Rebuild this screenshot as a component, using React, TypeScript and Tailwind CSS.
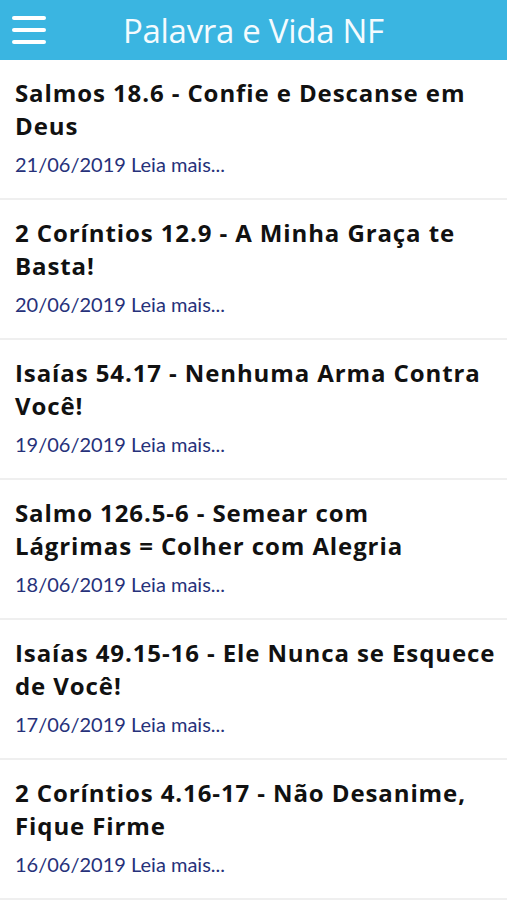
const posts = [
  { title: 'Salmos 18.6 - Confie e Descanse em Deus', date: '21/06/2019' },
  { title: '2 Coríntios 12.9 - A Minha Graça te Basta!', date: '20/06/2019' },
  { title: 'Isaías 54.17 - Nenhuma Arma Contra Você!', date: '19/06/2019' },
  { title: 'Salmo 126.5-6 - Semear com Lágrimas\u00a0= Colher com Alegria', date: '18/06/2019' },
  { title: 'Isaías 49.15-16 - Ele Nunca se Esquece de Você!', date: '17/06/2019' },
  { title: '2 Coríntios 4.16-17 - Não Desanime, Fique Firme', date: '16/06/2019' },
];

export default function App() {
  return (
    <div className="w-[507px] h-[900px] bg-white overflow-hidden font-['Lato',sans-serif]">
      <header className="h-[60px] bg-[#3ab5e1] flex items-center">
        <button className="w-[58px] h-full flex flex-col justify-center gap-[8px] pl-[12px]">
          <span className="block w-[34px] h-[4px] rounded-full bg-white" />
          <span className="block w-[34px] h-[4px] rounded-full bg-white" />
          <span className="block w-[34px] h-[4px] rounded-full bg-white" />
        </button>
        <h1 className="ml-[65px] text-[33px] text-[#f4fbfe] font-['Open_Sans',sans-serif] tracking-[-0.3px] leading-none">
          Palavra e Vida NF
        </h1>
      </header>
      <ul>
        {posts.map((p) => (
          <li key={p.date} className="h-[140px] border-b-[2px] border-[#efefef] pl-[15px] pr-[10px] pt-[16px]">
            <h2 className="text-[24px] leading-[33px] font-bold text-[#111] font-['Open_Sans',sans-serif] tracking-[0.9px]">
              {p.title}
            </h2>
            <p className="mt-[7px] text-[20px] text-[#26317a]">
              {p.date} Leia mais...
            </p>
          </li>
        ))}
      </ul>
    </div>
  );
}
